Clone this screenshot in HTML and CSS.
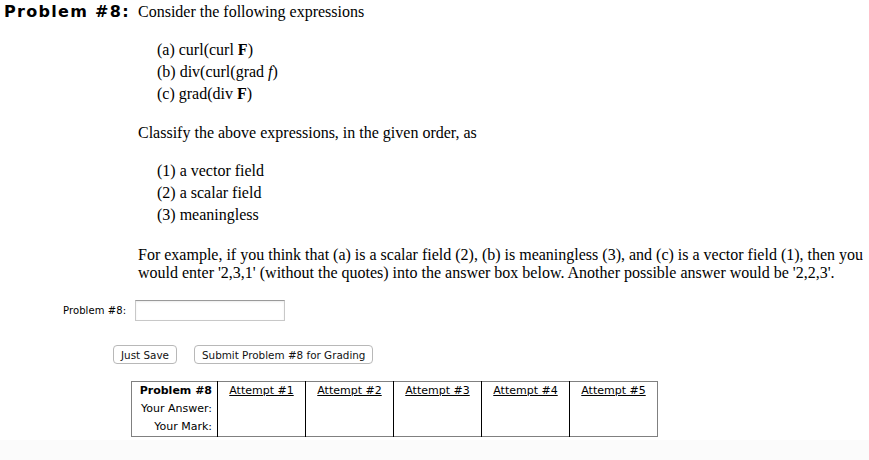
FILE: index.html
```html
<!DOCTYPE html>
<html lang="en">
<head>
    <meta charset="UTF-8">
    <title>Problem #8</title>
    <link rel="stylesheet" href="styles.css">
</head>
<body>
    <div class="page">
        <div class="problem">
            <div class="problem-num">Problem #8:</div>
            <div class="problem-body">
                <p class="lead">Consider the following expressions</p>
                <ul class="items">
                    <li>(a) curl(curl <b>F</b>)</li>
                    <li>(b) div(curl(grad <i>f</i>)</li>
                    <li>(c) grad(div <b>F</b>)</li>
                </ul>
                <p class="para">Classify the above expressions, in the given order, as</p>
                <ul class="items">
                    <li>(1) a vector field</li>
                    <li>(2) a scalar field</li>
                    <li>(3) meaningless</li>
                </ul>
                <p class="para example">For example, if you think that (a) is a scalar field (2), (b) is meaningless (3), and (c) is a vector field (1), then you would enter '2,3,1' (without the quotes) into the answer box below. Another possible answer would be '2,2,3'.</p>
            </div>
        </div>

        <div class="answer-row">
            <label class="answer-label" for="ans">Problem #8:</label>
            <input class="answer-input" id="ans" type="text">
        </div>

        <div class="buttons">
            <button class="btn">Just Save</button>
            <button class="btn">Submit Problem #8 for Grading</button>
        </div>

        <table class="attempts">
            <tr>
                <td class="row-head"><b>Problem #8</b></td>
                <td class="att"><a href="#">Attempt #1</a></td>
                <td class="att"><a href="#">Attempt #2</a></td>
                <td class="att"><a href="#">Attempt #3</a></td>
                <td class="att"><a href="#">Attempt #4</a></td>
                <td class="att"><a href="#">Attempt #5</a></td>
            </tr>
            <tr>
                <td class="row-head">Your Answer:</td>
                <td class="att"></td>
                <td class="att"></td>
                <td class="att"></td>
                <td class="att"></td>
                <td class="att"></td>
            </tr>
            <tr>
                <td class="row-head">Your Mark:</td>
                <td class="att"></td>
                <td class="att"></td>
                <td class="att"></td>
                <td class="att"></td>
                <td class="att"></td>
            </tr>
        </table>
    </div>
    <div class="footer"></div>
</body>
</html>
```

FILE: styles.css
```css
* {
    margin: 0;
    padding: 0;
    box-sizing: border-box;
}

body {
    background: #fff;
    color: #000;
    font-family: "DejaVu Sans", Verdana, sans-serif;
}

.page {
    padding-top: 3px;
    height: 440px;
}

.problem {
    display: flex;
}

.problem-num {
    width: 138px;
    padding-left: 4px;
    font-size: 16px;
    font-weight: bold;
    letter-spacing: 1.3px;
    line-height: 18px;
    white-space: nowrap;
}

.problem-body {
    flex: 1;
    font-family: "Liberation Serif", "Times New Roman", serif;
    font-size: 16px;
    line-height: 18px;
}

.items {
    list-style: none;
    padding-left: 19px;
    line-height: 22px;
    margin: 18px 0 19px;
}

.para + .items {
    margin-top: 18px;
    margin-bottom: 20px;
}

.answer-row {
    display: flex;
    align-items: center;
    margin-top: 18px;
    padding-left: 63px;
}

.answer-label {
    font-size: 10px;
    letter-spacing: 0.1px;
    width: 72px;
}

.answer-input {
    width: 150px;
    height: 21px;
    border: 1px solid #c8c8c8;
    border-top-color: #9a9a9a;
    box-shadow: inset 0 1px 2px rgba(0, 0, 0, 0.08);
    background: #fff;
}

.buttons {
    display: flex;
    gap: 17px;
    margin-top: 24px;
    padding-left: 113px;
}

.btn {
    font-family: "DejaVu Sans", sans-serif;
    font-size: 10.4px;
    height: 19px;
    padding: 0 7px;
    background: #fff;
    border: 1px solid #b8b8b8;
    border-radius: 4px;
    color: #111;
}

.attempts {
    margin: 17px 0 0 131px;
    border-collapse: collapse;
    border: 1px solid #808080;
    font-size: 11px;
}

.attempts td {
    height: 18px;
    line-height: 18px;
    padding: 0;
    white-space: nowrap;
}

.attempts tr:first-child td {
    height: 17px;
}

.row-head {
    width: 86px;
    text-align: right;
    padding-right: 5px !important;
}

.att {
    width: 88px;
    text-align: center;
    border-left: 1px solid #000;
}

.att a {
    color: #000;
}

.footer {
    height: 20px;
    background: #fbfbfb;
}
```
